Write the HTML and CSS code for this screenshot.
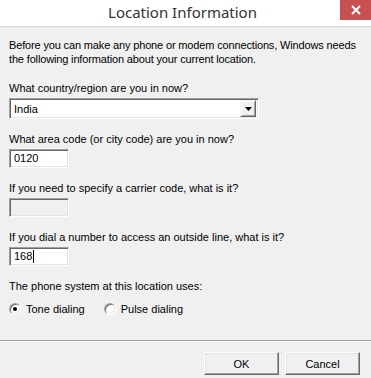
FILE: index.html
```html
<!DOCTYPE html>
<html lang="en">
<head>
  <meta charset="UTF-8" />
  <title>Location Information</title>
  <link rel="stylesheet" href="styles.css">
</head>
<body>

  <div class="dialog">

    <!-- タイトルバー -->
    <div class="titlebar">
      <span class="title">Location Information</span>
      <span class="close">
        <svg width="10" height="10" viewBox="0 0 10 10">
          <path d="M1,1 L9,9 M9,1 L1,9" stroke="white" stroke-width="2" fill="none"></path>
        </svg>
      </span>
    </div>

    <div class="content">
      <p class="intro">Before you can make any phone or modem connections, Windows needs the following information about your current location.</p>

      <div class="field">
        <div class="label">What country/region are you in now?</div>
        <div class="combo">
          <span class="combo_text">India</span>
          <span class="combo_btn">
            <svg width="7" height="4" viewBox="0 0 7 4">
              <path d="M0,0 L7,0 L3.5,4 Z" fill="black"></path>
            </svg>
          </span>
        </div>
      </div>

      <div class="field">
        <div class="label">What area code (or city code) are you in now?</div>
        <div class="textbox">0120</div>
      </div>

      <div class="field">
        <div class="label">If you need to specify a carrier code, what is it?</div>
        <div class="textbox disabled"></div>
      </div>

      <div class="field">
        <div class="label">If you dial a number to access an outside line, what is it?</div>
        <div class="textbox">168<span class="caret"></span></div>
      </div>

      <div class="label phone_label">The phone system at this location uses:</div>
      <div class="radios">
        <label class="radio"><span class="dot checked"></span>Tone dialing</label>
        <label class="radio"><span class="dot"></span>Pulse dialing</label>
      </div>
    </div>

    <div class="footer">
      <button class="btn">OK</button>
      <button class="btn">Cancel</button>
    </div>

  </div>

</body>
</html>
```

FILE: styles.css
```css
body {
  margin: 0;
  padding: 0;
  background: #f0f0f0;
  font-family: "Liberation Sans", Arial, sans-serif;
  font-size: 11px;
  color: #000;
}

.dialog {
  width: 371px;
  height: 378px;
  overflow: hidden;
  background: #f0f0f0;
}

/* ========================== */
/* タイトルバー */
/* ========================== */

.titlebar {
  height: 26px;
  background: #fff;
  border-bottom: 1px solid #d9d9d9;
  display: flex;
  justify-content: center;
  align-items: center;
  position: relative;
}

.title {
  font-family: "Noto Sans", "Open Sans", sans-serif;
  font-size: 15px;
  color: #333;
  margin-top: -2px;
  margin-left: -6px;
}

.close {
  position: absolute;
  top: 0;
  right: 0;
  width: 31px;
  height: 20px;
  background: #c75050;
  display: flex;
  justify-content: center;
  align-items: center;
}

/* ========================== */
/* 本文 */
/* ========================== */

.content {
  padding: 11px 0 0 9px;
}

.intro {
  margin: 0 0 15px;
  line-height: 14px;
  letter-spacing: -0.15px;
}

.label {
  line-height: 14px;
  margin-bottom: 3px;
}

.phone_label {
  margin-top: 3px;
}

.field {
  margin-bottom: 13px;
}

.textbox, .combo {
  box-sizing: border-box;
  background: #fff;
  border: 1px solid;
  border-color: #a0a0a0 #fff #fff #a0a0a0;
  box-shadow: inset 1px 1px 0 #696969, inset -1px -1px 0 #e3e3e3;
}

.textbox {
  width: 60px;
  height: 19px;
  padding: 0 4px;
  line-height: 17px;
  display: flex;
  align-items: center;
}

.textbox.disabled {
  background: #f0f0f0;
}

.caret {
  display: inline-block;
  width: 1px;
  height: 13px;
  background: #000;
  margin-left: 1px;
}

.combo {
  width: 250px;
  height: 21px;
  display: flex;
  align-items: center;
  justify-content: space-between;
  padding: 2px;
}

.combo_text {
  padding-left: 2px;
}

.combo_btn {
  box-sizing: border-box;
  width: 16px;
  height: 17px;
  background: #f0f0f0;
  border: 1px solid;
  border-color: #f0f0f0 #696969 #696969 #f0f0f0;
  box-shadow: inset 1px 1px 0 #fff, inset -1px -1px 0 #a0a0a0;
  display: flex;
  justify-content: center;
  align-items: center;
}

/* ========================== */
/* ラジオボタン */
/* ========================== */

.radios {
  display: flex;
  gap: 19px;
  margin-top: 9px;
  line-height: 14px;
}

.radio {
  display: flex;
  align-items: center;
  gap: 5px;
}

.dot {
  box-sizing: border-box;
  width: 12px;
  height: 12px;
  border-radius: 50%;
  background: #fff;
  border: 1px solid;
  border-color: #a0a0a0 #fff #fff #a0a0a0;
  box-shadow: inset 1px 1px 0 #696969, inset -1px -1px 0 #e3e3e3;
  position: relative;
}

.dot.checked::after {
  content: "";
  position: absolute;
  left: 3px;
  top: 3px;
  width: 4px;
  height: 4px;
  border-radius: 50%;
  background: #000;
}

/* ========================== */
/* ボタン */
/* ========================== */

.footer {
  margin-top: 24px;
  border-top: 1px solid #a0a0a0;
  box-shadow: inset 0 1px 0 #fff;
  display: flex;
  justify-content: flex-end;
  gap: 6px;
  padding: 11px 11px 0 0;
}

.btn {
  box-sizing: border-box;
  width: 75px;
  height: 23px;
  font-family: "Liberation Sans", Arial, sans-serif;
  font-size: 11px;
  color: #000;
  background: #f0f0f0;
  border: 1px solid;
  border-color: #fff #696969 #696969 #fff;
  box-shadow: inset -1px -1px 0 #a0a0a0, inset 1px 1px 0 #e3e3e3;
  padding: 0;
}
```
